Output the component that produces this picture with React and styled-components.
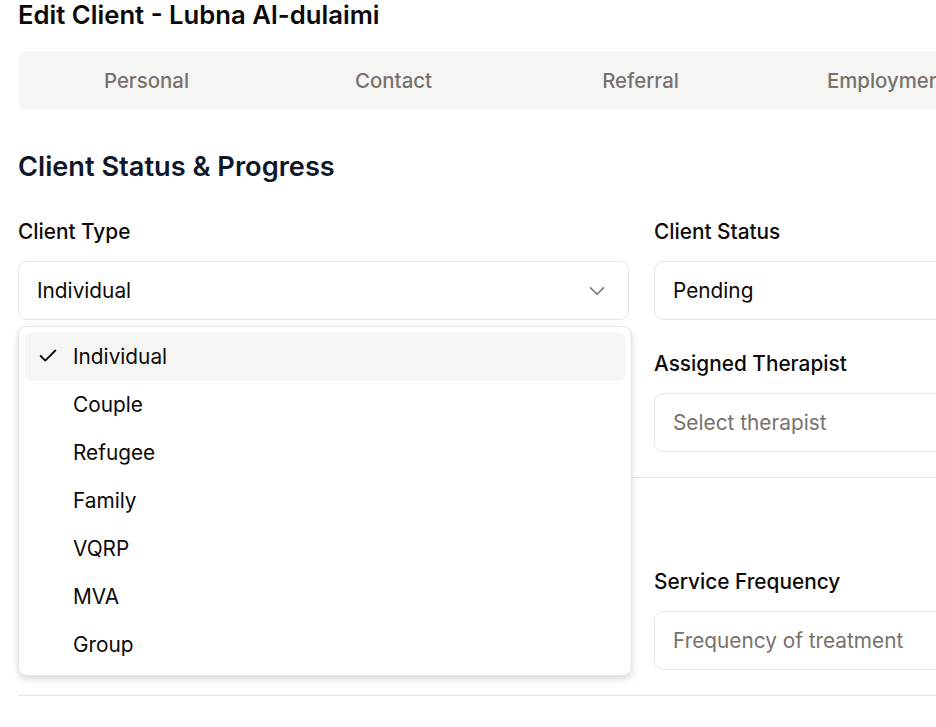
import styled, { createGlobalStyle } from "styled-components";

const GlobalStyle = createGlobalStyle`
  html, body {
    margin: 0;
    padding: 0;
    background: #ffffff;
    overflow: hidden;
  }
  body {
    font-family: Inter, "Noto Sans", "Liberation Sans", sans-serif;
    color: #0c0a09;
  }
`;

const Page = styled.div`
  position: relative;
  width: 1300px;
  padding: 0 18px;
`;

const Title = styled.h1`
  margin: 0;
  font-size: 25.7px;
  line-height: 30px;
  font-weight: 600;
  color: #0c0a09;
`;

const TabList = styled.div`
  margin-top: 21px;
  height: 59px;
  box-sizing: border-box;
  padding: 5px;
  background: #f5f5f4;
  border-radius: 9px;
  display: grid;
  grid-template-columns: repeat(5, 247px);
`;

const Tab = styled.div`
  display: flex;
  align-items: center;
  justify-content: center;
  font-size: 20.4px;
  font-weight: 500;
  color: #78716c;
`;

const SectionTitle = styled.h2`
  margin: 40px 0 0;
  font-size: 27.2px;
  line-height: 34px;
  font-weight: 600;
  color: #0f172a;
`;

const Grid = styled.div`
  display: grid;
  grid-template-columns: 611px 612px;
  column-gap: 25px;
  row-gap: 34px;
  margin-top: ${(p) => p.$top || 38}px;
`;

const Field = styled.div`
  display: flex;
  flex-direction: column;
  gap: 19px;
`;

const Label = styled.label`
  display: block;
  font-size: 20.8px;
  line-height: 20px;
  font-weight: 500;
  color: #0c0a09;
`;

const Select = styled.div`
  height: 59px;
  box-sizing: border-box;
  border: 1px solid #e7e5e4;
  border-radius: 9px;
  padding: 0 18px;
  display: flex;
  align-items: center;
  justify-content: space-between;
  font-size: 20.8px;
  color: ${(p) => (p.$placeholder ? "#78716c" : "#0c0a09")};
`;

const Divider = styled.div`
  border-top: 1px solid #e7e5e4;
  margin-top: 25px;
  padding-top: ${(p) => p.$pad || 24}px;
`;

const SubTitle = styled.h3`
  margin: 0;
  font-size: 22px;
  line-height: 28px;
  font-weight: 600;
`;

const Menu = styled.div`
  position: absolute;
  top: 326px;
  left: 18px;
  width: 614px;
  box-sizing: border-box;
  padding: 6px;
  background: #ffffff;
  border: 1px solid #e7e5e4;
  border-radius: 9px;
  box-shadow: 0 4px 10px rgba(0, 0, 0, 0.1), 0 2px 4px rgba(0, 0, 0, 0.06);
  z-index: 5;
`;

const Item = styled.div`
  height: 48px;
  box-sizing: border-box;
  padding: 0 0 2px 48px;
  display: flex;
  align-items: center;
  position: relative;
  border-radius: 6px;
  font-size: 20.8px;
  color: #0c0a09;
  background: ${(p) => (p.$active ? "#f5f5f4" : "transparent")};
`;

const Check = styled.span`
  position: absolute;
  left: 12px;
  top: 12px;
  width: 22px;
  height: 22px;
  display: flex;
`;

const Chevron = () => (
  <svg width="26" height="26" viewBox="0 0 24 24" fill="none" stroke="#78716c" strokeWidth="1.5" strokeLinecap="round" strokeLinejoin="round">
    <path d="m6 9 6 6 6-6" />
  </svg>
);

const CheckIcon = () => (
  <svg width="22" height="22" viewBox="0 0 24 24" fill="none" stroke="#0c0a09" strokeWidth="2" strokeLinecap="round" strokeLinejoin="round">
    <path d="M20 6 9 17l-5-5" />
  </svg>
);

const tabs = ["Personal", "Contact", "Referral", "Employment", "Status"];
const types = ["Individual", "Couple", "Refugee", "Family", "VQRP", "MVA", "Group"];

export default function App() {
  return (
    <>
      <GlobalStyle />
      <Page>
        <Title>Edit Client - Lubna Al-dulaimi</Title>
        <TabList>
          {tabs.map((t) => (
            <Tab key={t}>{t}</Tab>
          ))}
        </TabList>
        <SectionTitle>Client Status &amp; Progress</SectionTitle>
        <Grid>
          <Field>
            <Label>Client Type</Label>
            <Select>
              Individual
              <Chevron />
            </Select>
          </Field>
          <Field>
            <Label>Client Status</Label>
            <Select>
              Pending
              <Chevron />
            </Select>
          </Field>
          <Field>
            <Label>Progress</Label>
            <Select $placeholder>Select progress</Select>
          </Field>
          <Field>
            <Label>Assigned Therapist</Label>
            <Select $placeholder>
              Select therapist
              <Chevron />
            </Select>
          </Field>
        </Grid>
        <Divider>
          <SubTitle>Service Details</SubTitle>
          <Grid $top={42}>
            <Field>
              <Label>Service Type</Label>
              <Select $placeholder>Type of service</Select>
            </Field>
            <Field>
              <Label>Service Frequency</Label>
              <Select $placeholder>Frequency of treatment</Select>
            </Field>
          </Grid>
        </Divider>
        <Divider $pad={36}>
          <SubTitle>Notes</SubTitle>
        </Divider>
        <Menu>
          {types.map((t, i) => (
            <Item key={t} $active={i === 0}>
              {i === 0 && (
                <Check>
                  <CheckIcon />
                </Check>
              )}
              {t}
            </Item>
          ))}
        </Menu>
      </Page>
    </>
  );
}
